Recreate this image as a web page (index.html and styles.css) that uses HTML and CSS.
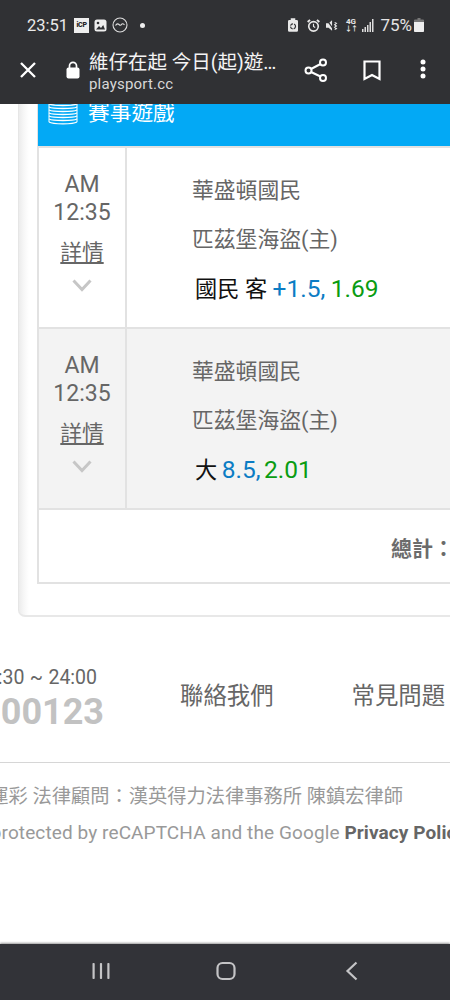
FILE: index.html
```html
<!DOCTYPE html>
<html lang="zh-Hant">
<head>
<meta charset="utf-8">
<title>維仔在起 今日(起)遊戲</title>
<link rel="stylesheet" href="styles.css">
</head>
<body>
<div class="screen">
  <header class="chrome">
    <div class="status">
      <div class="status-left">
        <span class="clock">23:51</span>
        <span class="icp">iCP</span>
        <svg class="ico" width="13" height="13" viewBox="0 0 13 13"><rect x="0.500" y="0.500" width="12" height="12" rx="2.500" fill="#eee"/><circle cx="4" cy="4" r="1.300" fill="#303134"/><path d="M2 10.500l3-3.500 2 2 2.200-3 1.800 4.500z" fill="#303134"/></svg>
        <svg class="ico" width="16" height="16" viewBox="0 0 16 16" fill="none" stroke="#ddd" stroke-width="1.100"><circle cx="8" cy="8" r="7"/><path d="M3.500 8.500c1.500-2 2.500-2 3.500-1s2 1 2.500 0 1.500-1 3 .3"/></svg>
        <span class="dot"></span>
      </div>
      <div class="status-right">
        <svg class="st-recycle" width="10" height="14" viewBox="0 0 11 15"><path d="M3 0h5v2h1.500A1.500 1.500 0 0 1 11 3.500V13.500A1.500 1.500 0 0 1 9.500 15h-8A1.500 1.500 0 0 1 0 13.500V3.500A1.500 1.500 0 0 1 1.500 2H3z" fill="#e8e8e8"/><circle cx="5.500" cy="9" r="2.800" fill="none" stroke="#303134" stroke-width="1.300" stroke-dasharray="3.500 1.200"/></svg>
        <svg width="13" height="13" viewBox="0 0 15 15"><circle cx="7.500" cy="8.500" r="5.500" fill="none" stroke="#e8e8e8" stroke-width="1.900"/><path d="M7.500 5.500v3.200l2 1.200" fill="none" stroke="#e8e8e8" stroke-width="1.300"/><path d="M0.800 3.500l2.700-2.500M14.200 3.500l-2.700-2.500" stroke="#e8e8e8" stroke-width="2.200"/></svg>
        <svg width="13" height="13" viewBox="0 0 15 15"><path d="M0 5h3l4-3.500v12L3 10H0z" fill="#e8e8e8"/><path d="M1 1l9 13" stroke="#303134" stroke-width="1.300"/><path d="M10 4l2 1-2 1.500 2 1.500-2 1.500 2 1.500-2 1" fill="none" stroke="#e8e8e8" stroke-width="1.300"/></svg>
        <span class="net">4G<span class="net-arrows">↓↑</span></span>
        <svg width="12" height="13" viewBox="0 0 12 13" fill="#ddd"><rect x="0" y="10" width="1.500" height="3"/><rect x="2.500" y="8" width="1.500" height="5"/><rect x="5" y="6" width="1.500" height="7"/><rect x="7.500" y="3" width="1.500" height="10"/><rect x="10" y="0" width="1.500" height="13"/></svg>
        <span class="battery-text">75%</span>
        <svg class="st-battery" width="10" height="14" viewBox="0 0 10 14"><path d="M3.500 0h3v1.500h2.500a1 1 0 0 1 1 1V13a1 1 0 0 1-1 1H1a1 1 0 0 1-1-1V2.500a1 1 0 0 1 1-1h2.500z" fill="#777"/><path d="M0 4h10v9a1 1 0 0 1-1 1H1a1 1 0 0 1-1-1z" fill="#eee"/></svg>
      </div>
    </div>
    <div class="toolbar">
      <svg class="close" width="18" height="18" viewBox="0 0 18 18"><path d="M2 2l14 14M16 2L2 16" stroke="#fff" stroke-width="2.300"/></svg>
      <svg class="lock" width="14" height="18" viewBox="0 0 14 18"><path d="M3.500 7V4.800a3.500 3.500 0 0 1 7 0V7" fill="none" stroke="#fff" stroke-width="1.700"/><rect x="0.500" y="6.500" width="13" height="11" rx="2" fill="#fff"/></svg>
      <div class="title-block">
        <div class="page-title">維仔在起 今日(起)遊…</div>
        <div class="page-url">playsport.cc</div>
      </div>
      <div class="actions">
        <svg width="24" height="24" viewBox="0 0 24 24" fill="none" stroke="#fff" stroke-width="2"><circle cx="19" cy="4.500" r="3"/><circle cx="4.500" cy="12.500" r="3"/><circle cx="19" cy="20" r="3"/><path d="M7 11l9.500-5M7 14l9.500 4.500"/></svg>
        <svg class="bookmark" width="18" height="21" viewBox="0 0 18 21" fill="none" stroke="#fff" stroke-width="2.200"><path d="M1.500 1.500h15v17.500l-7.500-4-7.500 4z"/></svg>
        <svg class="more" width="6" height="20" viewBox="0 0 6 20" fill="#fff"><circle cx="3" cy="3" r="2.500"/><circle cx="3" cy="10" r="2.500"/><circle cx="3" cy="17" r="2.500"/></svg>
      </div>
    </div>
  </header>

  <main class="content">
    <section class="card">
      <div class="table">
        <div class="table-head">
          <svg class="coins" width="30" height="22" viewBox="0 0 30 22" fill="none" stroke="#fff" stroke-width="1.300"><path d="M1 0c4 2 24 2 28 0M1 3c4 2 24 2 28 0M1 6c4 2 24 2 28 0M1 9c4 2 24 2 28 0M1 12c4 2 24 2 28 0M1 15c4 2 24 2 28 0M1 18c4 2.500 24 2.500 28 0"/><path d="M1 0v18M29 0v18" stroke-width="1"/></svg>
          <span class="head-title">賽事遊戲</span>
        </div>
        <div class="row">
          <div class="time-cell">
            <div class="time">AM<br>12:35</div>
            <a class="detail">詳情</a>
            <svg class="chevron" width="20" height="13" viewBox="0 0 20 13"><path d="M1.500 1.500l8.500 9 8.500-9" fill="none" stroke="#c6c6c6" stroke-width="3"/></svg>
          </div>
          <div class="game-cell">
            <div class="team">華盛頓國民</div>
            <div class="team">匹茲堡海盜(主)</div>
            <div class="bet"><span class="pick">國民 客</span> <span class="line">+1.5,</span> <span class="odds">1.69</span></div>
          </div>
        </div>
        <div class="row row-alt">
          <div class="time-cell">
            <div class="time">AM<br>12:35</div>
            <a class="detail">詳情</a>
            <svg class="chevron" width="20" height="13" viewBox="0 0 20 13"><path d="M1.500 1.500l8.500 9 8.500-9" fill="none" stroke="#c6c6c6" stroke-width="3"/></svg>
          </div>
          <div class="game-cell">
            <div class="team">華盛頓國民</div>
            <div class="team">匹茲堡海盜(主)</div>
            <div class="bet"><span class="pick">大</span> <span class="line">8.5,</span> <span class="odds">2.01</span></div>
          </div>
        </div>
        <div class="total">總計：</div>
      </div>
    </section>

    <footer class="footer">
      <div class="footer-top">
        <div class="service">
          <div class="hours">09:30 ~ 24:00</div>
          <div class="phone">0800-000123</div>
        </div>
        <a class="foot-link link-contact">聯絡我們</a>
        <a class="foot-link link-faq">常見問題</a>
      </div>
      <div class="legal">
        <div class="legal-line legal-law">玩運彩 法律顧問：漢英得力法律事務所 陳鎮宏律師</div>
        <div class="legal-line legal-cap">This site is protected by reCAPTCHA and the Google <b>Privacy Policy</b></div>
      </div>
    </footer>
  </main>

  <nav class="navbar">
    <svg width="18" height="18" viewBox="0 0 18 18" fill="#c4c4c6"><rect x="0.500" y="1" width="2.200" height="16" rx="0.800"/><rect x="7.900" y="1" width="2.200" height="16" rx="0.800"/><rect x="15.300" y="1" width="2.200" height="16" rx="0.800"/></svg>
    <svg width="20" height="20" viewBox="0 0 20 20"><rect x="1.500" y="2" width="17" height="16" rx="5" fill="none" stroke="#c4c4c6" stroke-width="2.200"/></svg>
    <svg class="nav-back" width="13" height="20" viewBox="0 0 13 20"><path d="M11.500 1.500L2.500 10l9 8.500" fill="none" stroke="#c4c4c6" stroke-width="2.200"/></svg>
  </nav>
</div>
</body>
</html>
```
FILE: styles.css
```css
* { box-sizing: border-box; }
html, body { margin: 0; padding: 0; background: #fff; }
body { font-family: Roboto, "Noto Sans CJK TC", sans-serif; }
a { color: inherit; }

.screen {
  width: 450px;
  height: 1000px;
  overflow: hidden;
  display: flex;
  flex-direction: column;
}

/* browser chrome */
.chrome { height: 104px; background: #303134; color: #fff; flex: none; }
.status {
  height: 50px;
  padding: 14px 26px 0 27px;
  display: flex;
  justify-content: space-between;
  align-items: flex-start;
}
.status-left, .status-right { display: flex; align-items: center; height: 22px; }
.status-left { gap: 5px; }
.status-right { gap: 6px; }
.clock { font-size: 16.500px; color: #eaeaea; margin-right: 1px; }
.icp {
  width: 15px; height: 15px;
  background: #eee; color: #222;
  font-size: 7px; font-weight: 900; line-height: 15px; text-align: center;
  letter-spacing: -0.300px;
}
.ico { flex: none; }
.dot { width: 5px; height: 5px; border-radius: 50%; background: #eee; margin-left: 7px; }
.net {
  width: 11px; font-size: 8px; line-height: 8px; font-weight: 700; color: #e8e8e8;
  display: flex; flex-direction: column; align-items: center; white-space: nowrap;
}
.net-arrows { font-size: 7px; line-height: 7px; letter-spacing: -1px; }
.battery-text { font-size: 17px; color: #e4e4e4; }
.st-recycle { margin-right: 3px; }
.st-battery { margin-left: -4px; }

.toolbar {
  height: 54px;
  padding-left: 19px;
  display: flex;
  align-items: flex-start;
}
.close { margin-top: 11px; flex: none; }
.lock { margin: 11px 0 0 29px; flex: none; }
.title-block { width: 196px; margin-left: 9px; }
.page-title { font-size: 19.500px; line-height: 23px; margin-top: 1px; white-space: nowrap; color: #f4f4f4; }
.page-url { font-size: 15px; line-height: 20px; color: #d8d8d8; letter-spacing: 0.200px; }
.actions {
  margin-left: 19px;
  margin-top: 8px;
  display: flex;
  align-items: center;
  gap: 30px;
}
.actions .bookmark { margin-left: 5px; }
.actions .more { margin-left: 9px; margin-top: -3px; }

/* page */
.content { flex: 1; min-height: 0; overflow: hidden; }
.card {
  width: 600px;
  height: 513px;
  margin-left: 18px;
  padding: 0 0 31px 19px;
  background: linear-gradient(90deg, #ececec 0, #f7f7f7 5px, #fff 10px);
  border-left: 1px solid #e6e6e6;
  border-bottom: 2px solid #e8e8e8;
  border-bottom-left-radius: 7px;
}
.table { width: 560px; margin-left: -1px; border: solid #e2e2e2; border-width: 0 2px 2px 2px; background: #fff; }
.table-head {
  height: 42px;
  margin-left: -1px;
  padding-left: 10px;
  background: #03a9f5;
  color: #fff;
  display: flex;
  align-items: flex-start;
}
.coins { flex: none; }
.head-title { font-size: 21.700px; line-height: 20px; margin-left: 10px; margin-top: -1px; }

.row {
  height: 181px;
  display: grid;
  grid-template-columns: 88px 1fr;
  border-top: 2px solid #e2e2e2;
  color: #666;
}
.row-alt { background: #f3f3f3; }
.row-alt + .total { border-top: 2px solid #e2e2e2; }
.time-cell {
  border-right: 2px solid #e2e2e2;
  padding-top: 23px;
  display: flex;
  flex-direction: column;
  align-items: center;
}
.time { font-size: 23px; line-height: 28px; text-align: center; }
.detail { font-size: 21.700px; line-height: 30px; margin-top: 11px; text-decoration: underline; text-underline-offset: 2px; }
.chevron { margin-top: 11px; }
.game-cell { padding: 18px 0 0 65px; }
.team { font-size: 21.800px; line-height: 49px; white-space: nowrap; height: 49px; }
.bet { font-size: 22.200px; line-height: 49px; height: 49px; padding-left: 3px; white-space: nowrap; }
.pick { color: #111; }
.line { color: #0b7cc4; font-size: 24.500px; }
.odds { color: #0a9c12; font-size: 24.500px; }
.row-alt .line { margin-left: -1px; }
.row-alt .odds { margin-left: -2px; }

.total {
  height: 74px;
  padding: 26px 0 0 352px;
  font-size: 21px;
  line-height: 26px;
  font-weight: 700;
  color: #6b6b6b;
  white-space: nowrap;
}

/* footer */
.footer { color: #666; }
.footer-top {
  height: 146px;
  display: flex;
  align-items: flex-start;
  border-bottom: 1px solid #d6d6d6;
}
.service {
  width: 104px;
  margin-top: 49px;
  display: flex;
  flex-direction: column;
  align-items: flex-end;
  white-space: nowrap;
  flex: none;
}
.hours { font-size: 19.500px; line-height: 24px; color: #666; margin-right: 7px; word-spacing: 0.500px; }
.phone { font-size: 36px; line-height: 44px; font-weight: 700; color: #c2c2c2; }
.foot-link { font-size: 23.400px; line-height: 32px; margin-top: 63px; white-space: nowrap; flex: none; }
.link-contact { margin-left: 76px; }
.link-faq { margin-left: 78px; }

.legal { height: 100px; overflow: hidden; white-space: nowrap; color: #999; }
.legal-line { display: flex; justify-content: flex-end; }
.legal-law { width: 403px; font-size: 19.250px; line-height: 28px; margin-top: 20px; }
.legal-cap { display: block; font-size: 19px; line-height: 28px; margin: 8px 0 0 -106px; letter-spacing: 0.100px; }
.legal-cap b { color: #666; }

/* system nav */
.navbar {
  height: 56px;
  flex: none;
  background: #323338;
  box-shadow: 0 -1px 2px #999;
  padding: 0 0 2px 92px;
  display: flex;
  align-items: center;
  gap: 106px;
}
.nav-back { margin-left: 3px; }
```
